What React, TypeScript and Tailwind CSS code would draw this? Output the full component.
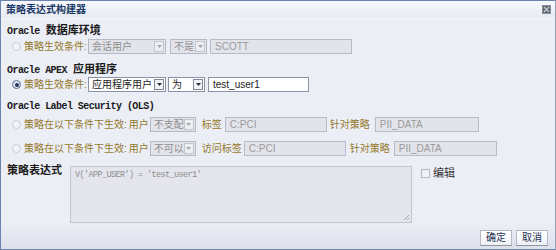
import React from "react";

function Caret({ dark }: { dark?: boolean }) {
  return (
    <svg width="5" height="3" viewBox="0 0 5 3">
      <path d="M0 0H5L2.5 3Z" fill={dark ? "#2a2f3a" : "#a3a8b2"} />
    </svg>
  );
}

function Select({ text, className, enabled }: { text: string; className: string; enabled?: boolean }) {
  return (
    <div
      className={`flex items-center h-[15px] border ${
        enabled ? "bg-white border-[#8a93a6] text-[#222]" : "bg-[#e3e4eb] border-[#b5b9c5] text-[#8e8e8e]"
      } ${className}`}
    >
      <span className="pl-[3px] text-[10px] leading-none whitespace-nowrap">{text}</span>
      <div
        className={`ml-auto mr-[1px] w-[10px] h-[11px] border flex items-center justify-center shrink-0 ${
          enabled ? "border-[#7e889b] bg-[#f1f3f7]" : "border-[#c3c6cf] bg-[#eceef2]"
        }`}
      >
        <Caret dark={enabled} />
      </div>
    </div>
  );
}

function Input({ text, className, enabled }: { text: string; className: string; enabled?: boolean }) {
  return (
    <div
      className={`flex items-center h-[15px] border pl-[4px] text-[10px] leading-none ${
        enabled ? "bg-white border-[#8a93a6] text-[#222]" : "bg-[#e3e4eb] border-[#b8bcc8] text-[#9a9a9a]"
      } ${className}`}
    >
      {text}
    </div>
  );
}

function Radio({ checked }: { checked?: boolean }) {
  return checked ? (
    <div className="w-[9px] h-[9px] rounded-full border border-[#5b6d8f] bg-[#dfe6f2] flex items-center justify-center">
      <div className="w-[4px] h-[4px] rounded-full bg-[#23385f]" />
    </div>
  ) : (
    <div className="w-[9px] h-[9px] rounded-full border border-[#c9ccd4] bg-[#f1f2f6]" />
  );
}

function Heading({ latin, cjk }: { latin: string; cjk: string }) {
  return (
    <div className="flex items-baseline h-[12px] leading-[12px] text-[#1a1a1a] font-bold">
      <span className="font-['Liberation_Mono',monospace] text-[10px] tracking-[-0.55px]">{latin}</span>
      {cjk && <span className="ml-[6px] font-['Noto_Sans_CJK_SC',sans-serif] text-[11px]">{cjk}</span>}
    </div>
  );
}

const gold = "text-[#94792a]";

export default function App() {
  return (
    <div className="w-[556px] h-[250px] flex flex-col border border-[#6b84ad] border-r-[#9aa5b8] bg-[#eceef6] font-['Liberation_Sans','Noto_Sans_CJK_SC',sans-serif] overflow-hidden">
      {/* Title bar */}
      <div className="h-[18px] flex items-center justify-between px-[5px] bg-gradient-to-b from-[#f6f8fc] to-[#e6eaf3] border-b border-[#f4f6fa]">
        <span className="text-[10px] font-bold text-[#1b3a66] leading-none">策略表达式构建器</span>
        <svg width="9" height="9" viewBox="0 0 9 9" className="mr-[-1px] mt-[-1px]">
          <rect x="0.5" y="0.5" width="8" height="8" fill="#5d636d" stroke="#8a909a" />
          <path d="M2 2L7 7M7 2L2 7" stroke="#c9cdd5" strokeWidth="1.2" />
        </svg>
      </div>

      {/* Body */}
      <div className="pl-[6px] flex flex-col">
        <div className="mt-[4px]">
          <Heading latin="Oracle" cjk="数据库环境" />
        </div>
        <div className="mt-[4px] flex items-center h-[15px]">
          <div className="ml-[5px]"><Radio /></div>
          <span className={`ml-[3px] w-[64px] text-[10px] leading-none whitespace-nowrap ${gold}`}>策略生效条件:</span>
          <Select text="会话用户" className="w-[78px]" />
          <Select text="不是" className="ml-[4px] w-[37px]" />
          <Input text="SCOTT" className="ml-[3px] w-[142px]" />
        </div>

        <div className="mt-[8px]">
          <Heading latin="Oracle APEX" cjk="应用程序" />
        </div>
        <div className="mt-[3px] flex items-center h-[15px]">
          <div className="ml-[5px]"><Radio checked /></div>
          <span className={`ml-[3px] w-[64px] text-[10px] leading-none whitespace-nowrap ${gold}`}>策略生效条件:</span>
          <Select text="应用程序用户" className="w-[78px]" enabled />
          <Select text="为" className="ml-[2px] w-[37px]" enabled />
          <Input text="test_user1" className="ml-[3px] w-[101px]" enabled />
        </div>

        <div className="mt-[9px]">
          <Heading latin="Oracle Label Security (OLS)" cjk="" />
        </div>
        <div className="mt-[4px] flex items-center h-[15px] text-[10px] leading-none">
          <div className="ml-[5px]"><Radio /></div>
          <span className={`ml-[3px] whitespace-nowrap ${gold}`}>策略在以下条件下生效:</span>
          <span className={`ml-[2px] whitespace-nowrap ${gold}`}>用户</span>
          <Select text="不支配" className="ml-[1px] w-[46px]" />
          <span className={`ml-[6px] whitespace-nowrap ${gold}`}>标签</span>
          <Input text="C:PCI" className="ml-[3px] w-[102px]" />
          <span className={`ml-[3px] whitespace-nowrap ${gold}`}>针对策略</span>
          <Input text="PII_DATA" className="ml-[5px] w-[104px]" />
        </div>
        <div className="mt-[9px] flex items-center h-[15px] text-[10px] leading-none">
          <div className="ml-[5px]"><Radio /></div>
          <span className={`ml-[3px] whitespace-nowrap ${gold}`}>策略在以下条件下生效:</span>
          <span className={`ml-[2px] whitespace-nowrap ${gold}`}>用户</span>
          <Select text="不可以" className="ml-[1px] w-[46px]" />
          <span className={`ml-[6px] whitespace-nowrap ${gold}`}>访问标签</span>
          <Input text="C:PCI" className="ml-[2px] w-[102px]" />
          <span className={`ml-[4px] whitespace-nowrap ${gold}`}>针对策略</span>
          <Input text="PII_DATA" className="ml-[4px] w-[103px]" />
        </div>

        <div className="mt-[10px] flex items-start">
          <span className="w-[63px] text-[11px] font-bold text-[#1a1a1a] leading-none mt-[-2px] font-['Noto_Sans_CJK_SC',sans-serif]">策略表达式</span>
          <div className="relative w-[342px] h-[57px] border border-[#c2c5ce] bg-[#e5e6ed] pl-[4px] pt-[4px]">
            <span className="block font-['Liberation_Mono',monospace] text-[8.5px] tracking-[-0.6px] text-[#8c8c8c] leading-none">V('APP_USER') = 'test_user1'</span>
            <svg width="7" height="7" viewBox="0 0 7 7" className="absolute right-[1px] bottom-[1px]">
              <path d="M6 1L1 6M6 4L4 6" stroke="#a0a4ae" strokeWidth="1" />
            </svg>
          </div>
          <div className="ml-[9px] mt-[2px] flex items-center">
            <div className="w-[9px] h-[9px] border border-[#b3b7c2] bg-gradient-to-br from-[#e8e9ee] to-[#fafafc]" />
            <span className="ml-[3px] text-[11px] leading-none text-[#333]">编辑</span>
          </div>
        </div>
      </div>

      {/* Footer */}
      <div className="flex-1 flex items-end justify-end gap-[4px] pr-[7px] pb-[3px] bg-gradient-to-b from-[#eceef6] to-[#dce0eb]">
        <div className="w-[32px] h-[16px] flex items-center justify-center border border-[#b5b9c4] border-b-[#8e95a3] bg-gradient-to-b from-white to-[#eef0f4] text-[10px] leading-none text-[#1e3355]">
          确定
        </div>
        <div className="w-[32px] h-[16px] flex items-center justify-center border border-[#b5b9c4] border-b-[#8e95a3] bg-gradient-to-b from-white to-[#eef0f4] text-[10px] leading-none text-[#1e3355]">
          取消
        </div>
      </div>
    </div>
  );
}
